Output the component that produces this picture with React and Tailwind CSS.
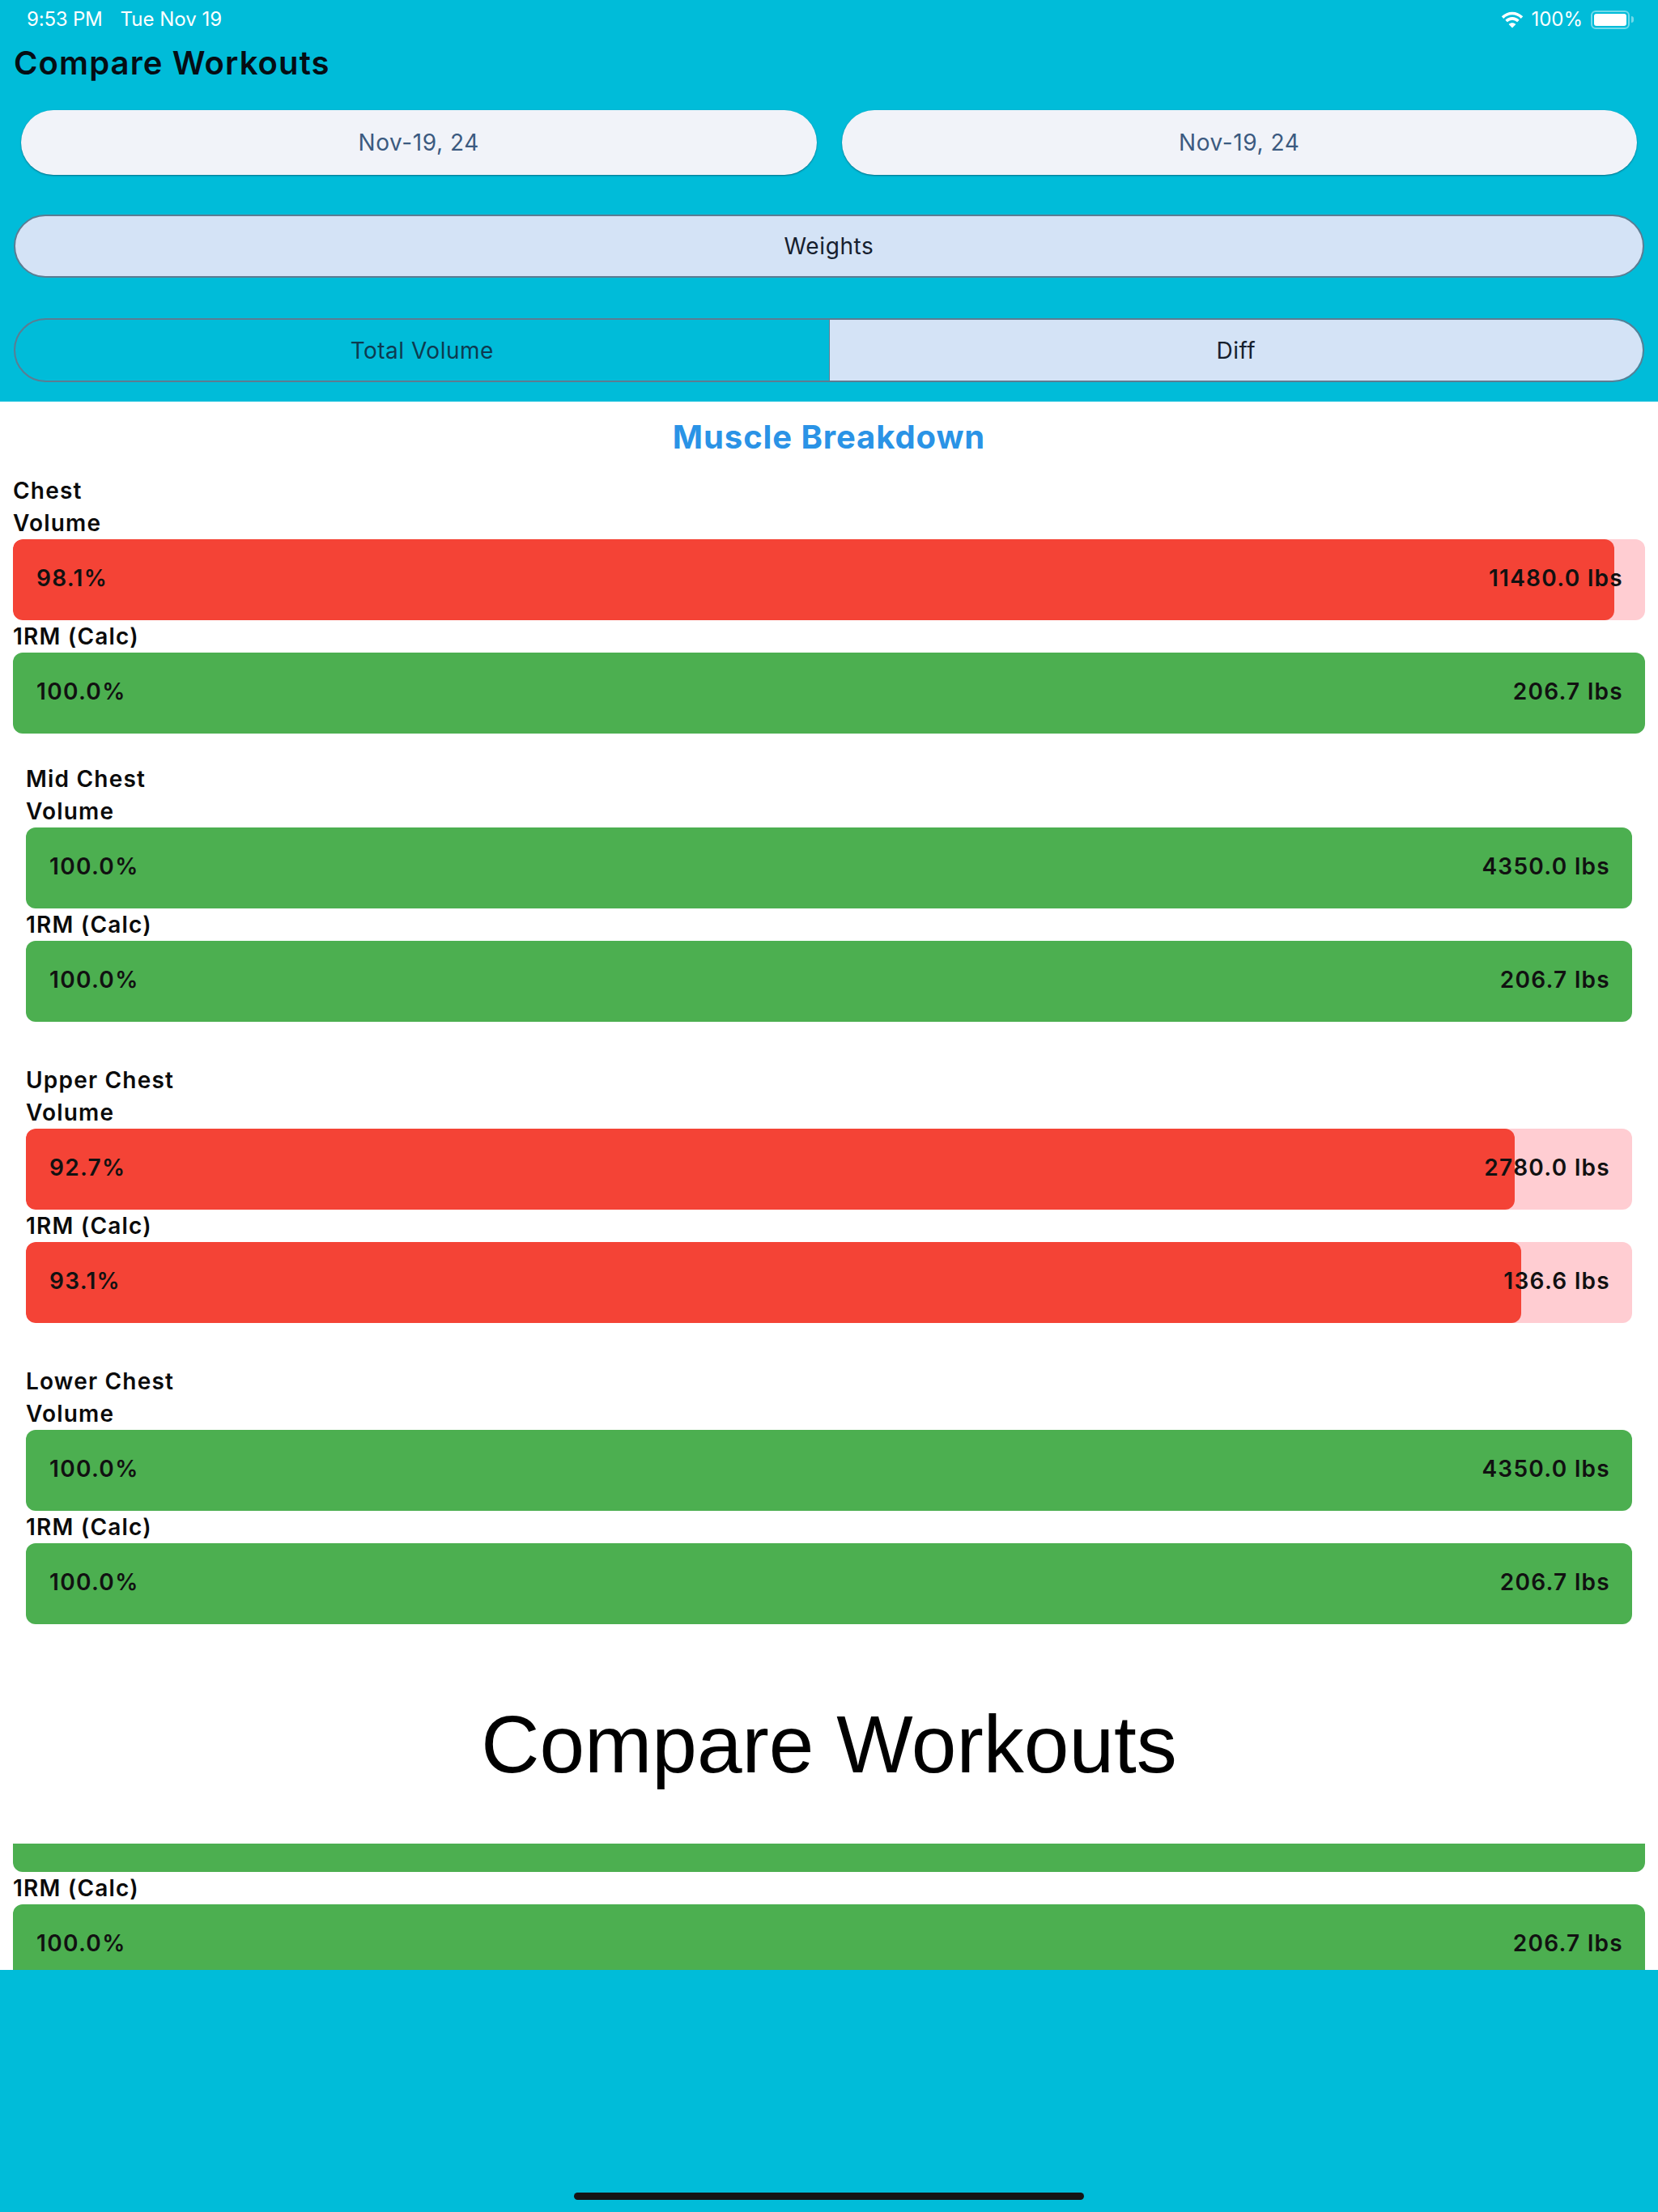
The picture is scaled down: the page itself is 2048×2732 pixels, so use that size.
import React from "react";

const font = "font-['Inter','Liberation_Sans',sans-serif]";

const sections = [
  {
    name: "Mid Chest",
    top: "mt-[36px]",
    bars: [
      { label: "Volume", pct: 100, value: "4350.0 lbs" },
      { label: "1RM (Calc)", pct: 100, value: "206.7 lbs" },
    ],
  },
  {
    name: "Upper Chest",
    top: "mt-[52px]",
    bars: [
      { label: "Volume", pct: 92.7, value: "2780.0 lbs" },
      { label: "1RM (Calc)", pct: 93.1, value: "136.6 lbs" },
    ],
  },
  {
    name: "Lower Chest",
    top: "mt-[52px]",
    bars: [
      { label: "Volume", pct: 100, value: "4350.0 lbs" },
      { label: "1RM (Calc)", pct: 100, value: "206.7 lbs" },
    ],
  },
];

function Label({ children }) {
  return (
    <div className="h-[40px] text-[28px] leading-[40px] font-semibold tracking-[1.2px] text-[#0b0b0b]">
      {children}
    </div>
  );
}

function Bar({ pct, value }) {
  const good = pct >= 100;
  return (
    <div className={`relative flex h-[100px] items-center justify-between overflow-hidden rounded-[12px] pb-[4px] pl-[29px] pr-[27px] ${good ? "bg-[#4caf50]" : "bg-[#ffcdd2]"}`}>
      {!good && (
        <div
          className="absolute inset-y-0 left-0 rounded-[12px] bg-[#f44336]"
          style={{ width: `${pct}%` }}
        />
      )}
      <span className="relative text-[28px] font-semibold tracking-[1.3px] text-[#111]">{pct.toFixed(1)}%</span>
      <span className="relative text-[28px] font-semibold tracking-[1.3px] text-[#111]">{value}</span>
    </div>
  );
}

function Section({ name, top, bars }) {
  return (
    <div className={`${top} px-[32px]`}>
      <Label>{name}</Label>
      {bars.map((b) => (
        <div key={b.label}>
          <Label>{b.label}</Label>
          <Bar pct={b.pct} value={b.value} />
        </div>
      ))}
    </div>
  );
}

function Wifi() {
  return (
    <svg width="28" height="21" viewBox="0 0 28 21" fill="none" stroke="white" strokeWidth="3.6">
      <path d="M2 7.6 C9 0.8 19 0.8 26 7.6" />
      <path d="M6.6 12 C11 7.8 17 7.8 21.4 12" />
      <path d="M14 20.5 L9.6 16 C12 13.8 16 13.8 18.4 16 Z" fill="white" stroke="none" />
    </svg>
  );
}

function Battery() {
  return (
    <div className="flex items-center">
      <div className="h-[23px] w-[48px] rounded-[6px] border-2 border-white/45 p-[2px]">
        <div className="h-full w-full rounded-[3px] bg-white" />
      </div>
      <div className="ml-[2px] h-[8px] w-[3px] rounded-r-full bg-white/45" />
    </div>
  );
}

export default function App() {
  return (
    <div className={`${font} flex h-[2732px] w-[2048px] flex-col overflow-hidden bg-[#00bcd9]`}>
      {/* Header */}
      <div className="h-[496px] shrink-0 px-[17px]">
        <div className="flex h-[47px] items-center justify-between pl-[16px] pr-[13px] pt-[1px] text-[24px] text-white">
          <div className="flex gap-[22px]">
            <span className="tracking-[-0.2px]">9:53 PM</span>
            <span>Tue Nov 19</span>
          </div>
          <div className="flex items-center gap-[9px]">
            <Wifi />
            <span className="mr-[1px]">100%</span>
            <Battery />
          </div>
        </div>
        <h1 className="mt-[7px] text-[40px] leading-[48px] font-semibold tracking-[1.1px] text-[#050d14]">Compare Workouts</h1>
        <div className="mt-[34px] flex gap-[31px] px-[9px]">
          <div className="flex h-[80px] flex-1 items-center justify-center rounded-full bg-[#f1f3f9] text-[28px] tracking-[0.6px] text-[#3b5a80] shadow-[0_1px_2px_rgba(0,60,80,0.6)]">Nov-19, 24</div>
          <div className="flex h-[80px] flex-1 items-center justify-center rounded-full bg-[#f1f3f9] text-[28px] tracking-[0.6px] text-[#3b5a80] shadow-[0_1px_2px_rgba(0,60,80,0.6)]">Nov-19, 24</div>
        </div>
        <div className="mt-[49px] flex h-[78px] items-center justify-center rounded-full border-2 border-[#5c7c92] bg-[#d4e3f6] text-[28px] tracking-[0.6px] text-[#16202e]">Weights</div>
        <div className="mt-[50px] flex h-[79px] overflow-hidden rounded-full border-2 border-[#5c7c92] text-[28px] tracking-[0.5px] text-[#16202e]">
          <div className="flex flex-1 items-center justify-center border-r border-[#5c7c92] text-[#0d3a50]">Total Volume</div>
          <div className="flex flex-1 items-center justify-center bg-[#d4e3f6]">Diff</div>
        </div>
      </div>

      {/* Scroll area */}
      <div className="h-[1937px] shrink-0 overflow-hidden bg-white">
        <div className="flex h-[90px] items-center justify-center pb-[2px] text-[40px] font-bold tracking-[0.9px] text-[#2a93e6]">Muscle Breakdown</div>
        <div className="px-[16px]">
          <Label>Chest</Label>
          <Label>Volume</Label>
          <Bar pct={98.1} value="11480.0 lbs" />
          <Label>1RM (Calc)</Label>
          <Bar pct={100} value="206.7 lbs" />
        </div>
        {sections.map((s) => (
          <Section key={s.name} {...s} />
        ))}
        <div className="flex h-[271px] items-center justify-center pt-[24px] font-['Liberation_Sans',sans-serif] text-[100px] text-black">Compare Workouts</div>
        <div className="px-[16px]">
          <div className="h-[35px] rounded-b-[12px] bg-[#4caf50]" />
          <Label>1RM (Calc)</Label>
          <Bar pct={100} value="206.7 lbs" />
        </div>
      </div>

      {/* Home indicator */}
      <div className="flex flex-1 items-end justify-center pb-[15px]">
        <div className="h-[9px] w-[630px] rounded-full bg-[#151515]" />
      </div>
    </div>
  );
}
